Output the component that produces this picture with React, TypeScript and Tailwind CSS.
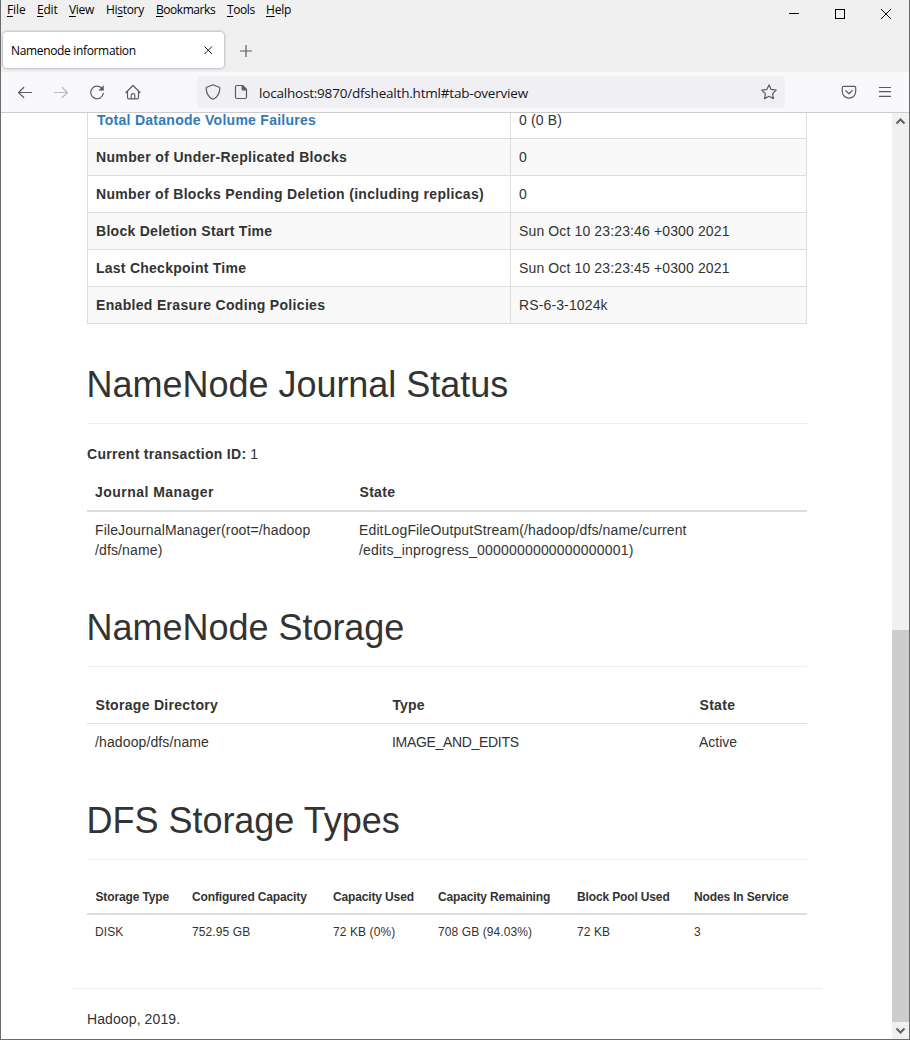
import type { ReactNode } from "react";

const menus: { before: string; key: string; after: string; cls: string }[] = [
  { before: "", key: "F", after: "ile", cls: "w-[30px] tracking-[-0.1px]" },
  { before: "", key: "E", after: "dit", cls: "w-[32px] tracking-[-0.2px]" },
  { before: "", key: "V", after: "iew", cls: "w-[37px] tracking-[-0.3px]" },
  { before: "Hi", key: "s", after: "tory", cls: "w-[50px] tracking-[-0.3px]" },
  { before: "", key: "B", after: "ookmarks", cls: "w-[71px] tracking-[-0.45px]" },
  { before: "", key: "T", after: "ools", cls: "w-[39px] tracking-[-0.4px]" },
  { before: "", key: "H", after: "elp", cls: "w-[40px] tracking-[-0.2px]" },
];

const overview = [
  { label: "Number of Under-Replicated Blocks", value: "0", cls: "tracking-[0.35px]" },
  { label: "Number of Blocks Pending Deletion (including replicas)", value: "0", cls: "tracking-[0.33px]" },
  { label: "Block Deletion Start Time", value: "Sun Oct 10 23:23:46 +0300 2021", cls: "tracking-[0.28px]" },
  { label: "Last Checkpoint Time", value: "Sun Oct 10 23:23:45 +0300 2021", cls: "tracking-[0.25px]" },
  { label: "Enabled Erasure Coding Policies", value: "RS-6-3-1024k", cls: "tracking-[0.32px]" },
];

function Icon({ children, className = "" }: { children: ReactNode; className?: string }) {
  return (
    <svg
      viewBox="0 0 16 16"
      className={`size-4 shrink-0 fill-none stroke-[#5b5b66] ${className}`}
      strokeWidth="1.2"
      strokeLinecap="round"
      strokeLinejoin="round"
    >
      {children}
    </svg>
  );
}

function SectionTitle({ children }: { children: ReactNode }) {
  return (
    <div className="h-[100px] border-b border-[#eeeeee] pt-[41px]">
      <h1 className="-ml-[0.5px] text-[36px] leading-[40px] tracking-[-0.02px] whitespace-nowrap">{children}</h1>
    </div>
  );
}

function Browser() {
  return (
    <header className="shrink-0 bg-[#f0f0f0] text-black">
      <div className="flex h-[30px] justify-between">
        <nav className="flex pl-[6px] font-['Open_Sans','Noto_Sans',sans-serif] text-[12px] leading-[20px] whitespace-nowrap">
          {menus.map((m) => (
            <span key={m.key + m.after} className={m.cls}>
              {m.before}
              <span className="underline decoration-1 underline-offset-2">{m.key}</span>
              {m.after}
            </span>
          ))}
        </nav>
        <div className="flex gap-[35px] pt-[8px] pr-[17px]">
          <svg className="size-[11px]" viewBox="0 0 11 11" shapeRendering="crispEdges">
            <path d="M0 5.500h10" stroke="#000" />
          </svg>
          <svg className="size-[11px]" viewBox="0 0 11 11" shapeRendering="crispEdges">
            <path d="M.5 1.500h9v9h-9z" fill="none" stroke="#000" />
          </svg>
          <svg className="size-[11px]" viewBox="0 0 11 11">
            <path d="M0 1l10 10M10 1L0 11" fill="none" stroke="#000" />
          </svg>
        </div>
      </div>
      <div className="flex h-[42px] items-start pl-[2px]">
        <div className="mt-[2px] flex h-[36px] w-[221px] items-center justify-between rounded-[4px] bg-white pr-[11px] pl-[8px] shadow-[0_0_3px_rgba(80,80,110,0.65)]">
          <span className="pt-[2px] font-['Open_Sans','Noto_Sans',sans-serif] text-[12px] tracking-[-0.34px] whitespace-nowrap">
            Namenode information
          </span>
          <svg className="size-[10px]" viewBox="0 0 10 10">
            <path d="M1.500 1.500l7.500 7.500M9 1.500L1.500 9" stroke="#15141a" />
          </svg>
        </div>
        <svg className="mt-[15px] ml-[16px] size-[12px]" viewBox="0 0 12 12">
          <path d="M6 0v12M0 6h12" stroke="#5b5b66" strokeWidth="1.2" />
        </svg>
      </div>
      <div className="flex h-[41px] items-center border-b border-[#cccccc] bg-[#f9f9fb] pl-[16px]">
        <Icon className="mr-[20px]">
          <path d="M14.500 8.500H1.500M6.700 3.500L1.500 8.500L6.700 13.500" />
        </Icon>
        <Icon className="mr-[20px] opacity-40">
          <path d="M1.500 8.500h13M9.300 3.500L14.500 8.500L9.300 13.500" />
        </Icon>
        <Icon className="mr-[20px]">
          <path d="M13.300 4.900A6.300 6.300 0 1 0 14.300 9.300" />
          <path d="M14.500 2v4.300h-4.300z" className="fill-[#5b5b66]" strokeWidth=".6" />
        </Icon>
        <Icon>
          <path d="M1 8.500L8 1.500l7 7M2.500 7.500v5.700q0 1.600 1.600 1.600h7.800q1.600 0 1.600-1.600V7.500M6.200 14.600v-3.400q0-1.500 1.800-1.500t1.800 1.500v3.400" />
        </Icon>
        <div className="ml-[56px] flex h-[32px] w-[588px] items-center rounded-[4px] bg-[#f0f0f4] pr-[8px] pl-[8px]">
          <Icon className="mr-[12px]">
            <path d="M8 .8l6.300 2.400q.5.200.5.700c0 5.200-2 8.800-6.200 11.100q-.6.300-1.200 0C3.200 12.700 1.200 9.100 1.200 3.900q0-.5.500-.7z" />
          </Icon>
          <Icon className="mr-[10px]">
            <path d="M4 1.500h5.500l4 4v7.500q0 1.500-1.500 1.500H4q-1.500 0-1.500-1.500V3Q2.500 1.500 4 1.500z" />
            <path d="M9.200 1.500v4.300h4.300z" className="fill-[#5b5b66]" />
          </Icon>
          <span className="grow pt-[2px] font-['Open_Sans','Noto_Sans',sans-serif] text-[13.500px] tracking-[-0.2px] whitespace-nowrap text-[#15141a]">
            localhost:9870/dfshealth.html#tab-overview
          </span>
          <Icon>
            <path d="M8 .9l2.200 4.500 5 .7-3.600 3.500.8 5L8 12.300l-4.400 2.300.8-5L.8 6.100l5-.7z" />
          </Icon>
        </div>
        <Icon className="ml-[56px]">
          <path d="M2.700 2.300h10.600q1.400 0 1.400 1.400v3.900a6.700 6.500 0 0 1-13.400 0V3.700q0-1.400 1.400-1.400zM4.800 6.700L8 9.700l3.200-3" />
        </Icon>
        <svg className="ml-[22px] h-[12px] w-[12px]" viewBox="0 0 12 12">
          <path d="M0 1.500h12M0 5.700h12M0 10.300h12" stroke="#5b5b66" strokeWidth="1.2" />
        </svg>
      </div>
    </header>
  );
}

function Overview() {
  return (
    <table className="-mt-[12px] w-[720px] table-fixed border-collapse [&_td]:h-[37px] [&_td]:border [&_td]:border-[#dddddd] [&_td]:px-[8px] [&_td]:leading-[20px]">
      <colgroup>
        <col className="w-[423px]" />
        <col />
      </colgroup>
      <tbody>
        <tr>
          <td className="font-bold tracking-[0.27px] text-[#337ab7]">
            <span className="ml-px">Total Datanode Volume Failures</span>
          </td>
          <td className="tracking-[0.15px]">0 (0 B)</td>
        </tr>
        {overview.map((row, i) => (
          <tr key={row.label} className={i % 2 === 0 ? "bg-[#f9f9f9]" : ""}>
            <td className={`font-bold ${row.cls}`}>{row.label}</td>
            <td className="tracking-[0.13px]">{row.value}</td>
          </tr>
        ))}
      </tbody>
    </table>
  );
}

function Journal() {
  return (
    <div>
      <p className="mt-[20px] h-[30px] leading-[20px]">
        <b className="tracking-[0.3px]">Current transaction ID:</b> 1
      </p>
      <div className="grid h-[38px] grid-cols-[264.5px_1fr] border-b-2 border-[#dddddd] pl-[8px] leading-[36px] font-bold">
        <span className="tracking-[0.46px]">Journal Manager</span>
        <span className="tracking-[0.3px]">State</span>
      </div>
      <div className="grid h-[55px] grid-cols-[264px_1fr] pt-[8px] pl-[8px] leading-[20px] tracking-[0.13px]">
        <span>
          FileJournalManager(root=/hadoop
          <br />
          /dfs/name)
        </span>
        <span>
          EditLogFileOutputStream(/hadoop/dfs/name/current
          <br />
          <span className="tracking-[0.2px]">/edits_inprogress_0000000000000000001)</span>
        </span>
      </div>
    </div>
  );
}

export default function App() {
  return (
    <div className="flex h-[1040px] w-[910px] flex-col overflow-hidden border-x border-b border-[#6b6b6b] bg-white font-['Liberation_Sans',Arial,sans-serif] text-[14px] text-[#333333]">
      <Browser />
      <div className="flex min-h-0 grow">
        <main className="min-w-0 grow overflow-hidden pl-[86px]">
          <div className="w-[720px]">
            <Overview />
            <SectionTitle>NameNode Journal Status</SectionTitle>
            <Journal />
            <SectionTitle>NameNode Storage</SectionTitle>
            <div className="mt-[20px] grid h-[37px] grid-cols-[297px_307px_1fr] border-b border-[#dddddd] pl-[8.5px] leading-[36px] font-bold">
              <span className="tracking-[0.3px]">Storage Directory</span>
              <span className="tracking-[0.1px]">Type</span>
              <span className="tracking-[0.3px]">State</span>
            </div>
            <div className="grid h-[36px] grid-cols-[297px_307px_1fr] pl-[8px] leading-[37px]">
              <span className="tracking-[0.12px]">/hadoop/dfs/name</span>
              <span className="tracking-[-0.32px]">IMAGE_AND_EDITS</span>
              <span>Active</span>
            </div>
            <SectionTitle>DFS Storage Types</SectionTitle>
            <div className="mt-[20px] grid h-[35px] grid-cols-[96.5px_141px_105px_139px_117px_1fr] border-b-2 border-[#dddddd] pl-[8.5px] text-[12px] leading-[34px] font-bold tracking-[-0.14px] whitespace-nowrap">
              <span>Storage Type</span>
              <span>Configured Capacity</span>
              <span>Capacity Used</span>
              <span>Capacity Remaining</span>
              <span>Block Pool Used</span>
              <span>Nodes In Service</span>
            </div>
            <div className="grid h-[73px] grid-cols-[97px_141px_105px_139px_117px_1fr] pl-[8px] text-[12px] leading-[34px] tracking-[0.1px] whitespace-nowrap">
              <span>DISK</span>
              <span>752.95 GB</span>
              <span>72 KB (0%)</span>
              <span>708 GB (94.03%)</span>
              <span>72 KB</span>
              <span>3</span>
            </div>
          </div>
          <footer className="-ml-[15px] w-[750px] border-t border-[#eeeeee] pt-[20px] pl-[15px] leading-[20px] tracking-[0.1px]">
            Hadoop, 2019.
          </footer>
        </main>
        <div className="flex w-[17px] shrink-0 flex-col items-center bg-[#f0f0f0]">
          <svg className="h-[17px] w-[17px] shrink-0" viewBox="0 0 17 17">
            <path d="M4.500 10.500l4-4 4 4" fill="none" stroke="#606060" strokeWidth="2" />
          </svg>
          <div className="mt-[500px] h-[392px] w-full bg-[#cdcdcd]" />
          <svg className="h-[17px] w-[17px] shrink-0" viewBox="0 0 17 17">
            <path d="M4.500 6.500l4 4 4-4" fill="none" stroke="#606060" strokeWidth="2" />
          </svg>
        </div>
      </div>
    </div>
  );
}
